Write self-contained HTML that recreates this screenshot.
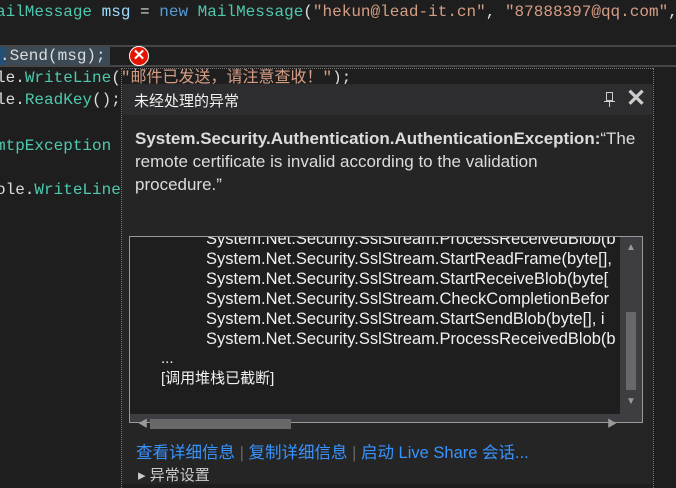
<!DOCTYPE html>
<html><head><meta charset="utf-8"><style>
body{margin:0;width:676px;height:474px;overflow:hidden;background:#1e1e1e;position:relative;font-family:"Liberation Mono","Noto Sans CJK SC",monospace;}
.c{position:absolute;font-size:16px;white-space:pre;color:#dcdcdc;line-height:20px;}
.t{color:#4ec9b0}.k{color:#569cd6}.s{color:#d69d85}.v{color:#9cdcfe}
.ui{font-family:"Liberation Sans","Noto Sans CJK SC",sans-serif;}
.a{position:absolute}
</style></head><body>
<div class="c" style="left:-4px;top:2px"><span class="t">ailMessage</span> <span class="v">msg</span> = <span class="k">new</span> <span class="t">MailMessage</span>(<span class="s">"hekun@lead-it.cn"</span>, <span class="s">"87888397@qq.com"</span>,</div>
<div class="a" style="left:0;top:45px;width:676px;height:22px;border-top:2px solid #464646;border-bottom:2px solid #464646;box-sizing:border-box"></div>
<div class="a" style="left:0;top:47px;width:110px;height:18px;background:#3b4a55"></div>
<div class="a" style="left:0;top:47px;width:6px;height:18px;background:#264f78"></div>
<div class="c" style="left:0;top:46px">.Send(msg);</div>
<div class="a" style="left:129px;top:46px;width:20px;height:20px;border-radius:50%;background:#e51400;border:1px solid #fff;box-sizing:border-box;color:#fff;font:bold 15px/18px 'Liberation Sans';text-align:center">✕</div>
<div class="c" style="left:-4px;top:68px">le.<span class="t">WriteLine</span>(<span class="s">"邮件已发送，请注意查收！"</span>);</div>
<div class="c" style="left:-4px;top:90px">le.<span class="t">ReadKey</span>();</div>
<div class="c" style="left:-4px;top:136px"><span class="t">mtpException</span></div>
<div class="c" style="left:-4px;top:180px">ole.<span class="t">WriteLine</span></div>
<div class="a" style="left:121px;top:84px;width:532px;height:400px;background:#252526"></div>
<div class="a" style="left:121px;top:68px;width:0;height:420px;border-left:1px dotted #777"></div>
<div class="a" style="left:121px;top:68px;width:532px;height:0;border-top:1px dotted #777"></div>
<div class="a" style="left:653px;top:68px;width:0;height:420px;border-left:1px dotted #777"></div>
<div class="a" style="left:123px;top:84px;width:529px;height:31px;background:#2d2d30"></div>
<div class="a ui" style="left:134px;top:90px;font-size:15px;color:#f1f1f1">未经处理的异常</div>
<div class="a" style="left:606px;top:92px;width:7px;height:9px;border:1px solid #ccc;box-sizing:border-box"></div>
<div class="a" style="left:604px;top:101px;width:11px;height:1px;background:#ccc"></div>
<div class="a" style="left:609px;top:101px;width:1px;height:6px;background:#ccc"></div>
<div class="a ui" style="left:626px;top:84px;font-size:24px;color:#ccc;font-weight:bold">✕</div>
<div class="a ui" style="left:135px;top:127px;width:510px;font-size:17px;line-height:23px;color:#dcdcdc"><b>System.Security.Authentication.AuthenticationException:</b>“The remote certificate is invalid according to the validation<br>procedure.”</div>
<div class="a" style="left:129px;top:236px;width:514px;height:187px;border:1px solid #999;box-sizing:border-box;background:#1e1e1e;overflow:hidden">
<div class="a ui" style="left:76px;top:-8px;font-size:16.5px;line-height:20px;color:#f1f1f1;white-space:pre">System.Net.Security.SslStream.ProcessReceivedBlob(b
System.Net.Security.SslStream.StartReadFrame(byte[],
System.Net.Security.SslStream.StartReceiveBlob(byte[
System.Net.Security.SslStream.CheckCompletionBefor
System.Net.Security.SslStream.StartSendBlob(byte[], i
System.Net.Security.SslStream.ProcessReceivedBlob(b</div>
<div class="a ui" style="left:31px;top:112px;font-size:15px;line-height:20px;color:#f1f1f1;white-space:pre">...
[调用堆栈已截断]</div>
<div class="a" style="left:490px;top:0;width:22px;height:185px;background:#3e3e42"></div>
<div class="a" style="left:496px;top:75px;width:10px;height:78px;background:#686868"></div>
<div class="a" style="left:0;top:177px;width:490px;height:18px;background:#3e3e42"></div>
</div>
<div class="a" style="left:130px;top:414px;width:491px;height:8px;background:#3e3e42"></div>
<div class="a" style="left:150px;top:419px;width:141px;height:10px;background:#686868"></div>
<div class="a ui" style="left:138px;top:415px;font-size:10px;color:#999">◀</div>
<div class="a ui" style="left:607px;top:415px;font-size:10px;color:#999">▶</div>
<div class="a ui" style="left:626px;top:242px;font-size:10px;color:#999">▲</div>
<div class="a ui" style="left:626px;top:396px;font-size:10px;color:#999">▼</div>
<div class="a ui" style="left:136px;top:439px;font-size:16.5px;color:#3794ff;white-space:pre">查看详细信息 <span style="color:#666">|</span> 复制详细信息 <span style="color:#666">|</span> 启动 Live Share 会话...</div>
<div class="a ui" style="left:138px;top:464px;font-size:15px;color:#ccc">▸ 异常设置</div>
</body></html>
